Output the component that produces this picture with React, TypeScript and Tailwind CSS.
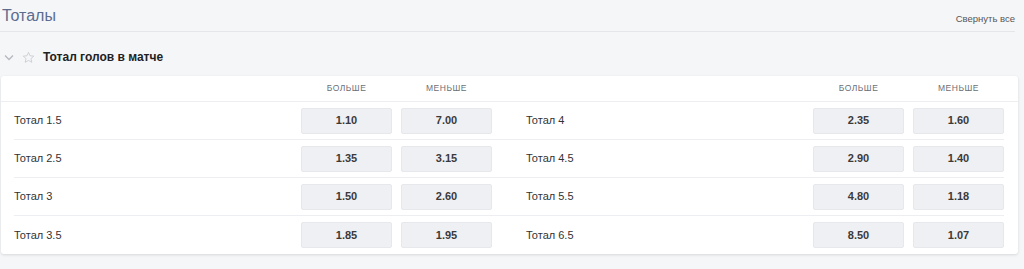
import React from "react";

const rows = [
  { l: "Тотал 1.5", lo: "1.10", lu: "7.00", r: "Тотал 4", ro: "2.35", ru: "1.60" },
  { l: "Тотал 2.5", lo: "1.35", lu: "3.15", r: "Тотал 4.5", ro: "2.90", ru: "1.40" },
  { l: "Тотал 3", lo: "1.50", lu: "2.60", r: "Тотал 5.5", ro: "4.80", ru: "1.18" },
  { l: "Тотал 3.5", lo: "1.85", lu: "1.95", r: "Тотал 6.5", ro: "8.50", ru: "1.07" },
];

function Odd({ v }: { v: string }) {
  return (
    <div className="w-[91px] h-[26px] flex items-center justify-center rounded-[2px] bg-[#eff0f3] border border-[#e6e8ec] text-[11px] font-bold text-[#3a3a3a]">
      {v}
    </div>
  );
}

export default function App() {
  return (
    <div
      className="w-[1024px] h-[269px] bg-[#f5f6f8] overflow-hidden"
      style={{ fontFamily: '"Liberation Sans", Arial, sans-serif' }}
    >
      <div className="flex items-end justify-between h-[32px] mr-[9px] border-b border-[#e4e6ea] pb-[7px]">
        <div className="pl-[2px] text-[16px] leading-none text-[#5b6c8f]">Тоталы</div>
        <div className="text-[9.5px] leading-none text-[#555] mb-[1px]">Свернуть все</div>
      </div>
      <div className="flex items-center h-[44px] pt-[6px]">
        <svg width="10" height="7" viewBox="0 0 10 7" className="ml-[4px]">
          <path d="M1 1.5 L5 5.5 L9 1.5" fill="none" stroke="#b5b9c0" strokeWidth="1.3" />
        </svg>
        <svg width="13" height="13" viewBox="0 0 24 24" className="ml-[8px]">
          <path
            d="M12 2.5l2.9 6.3 6.8.7-5.1 4.6 1.5 6.8L12 17.4l-6.1 3.5 1.5-6.8-5.1-4.6 6.8-.7z"
            fill="none"
            stroke="#c3c6cc"
            strokeWidth="1.4"
            strokeLinejoin="round"
          />
        </svg>
        <div className="ml-[8px] text-[12px] font-bold text-[#222]">Тотал голов в матче</div>
      </div>
      <div className="ml-[1px] w-[1017px] bg-white rounded-[3px] shadow-[0_1px_3px_rgba(0,0,0,0.12)]">
        <div className="h-[26px] border-b border-[#eceef1] flex items-center pl-[13px] text-[8.5px] tracking-[0.5px] text-[#6b6f76]">
          <div className="w-[287px]" />
          <div className="w-[91px] text-center">БОЛЬШЕ</div>
          <div className="w-[9px]" />
          <div className="w-[91px] text-center">МЕНЬШЕ</div>
          <div className="w-[34px]" />
          <div className="w-[287px]" />
          <div className="w-[91px] text-center">БОЛЬШЕ</div>
          <div className="w-[9px]" />
          <div className="w-[91px] text-center">МЕНЬШЕ</div>
        </div>
        <div className="ml-[13px] w-[990px]">
          {rows.map((r, i) => (
            <div
              key={i}
              className={
                "h-[38px] flex items-center text-[11px] text-[#333] " +
                (i < rows.length - 1 ? "border-b border-[#eceef1]" : "")
              }
            >
              <div className="w-[287px]">{r.l}</div>
              <Odd v={r.lo} />
              <div className="w-[9px]" />
              <Odd v={r.lu} />
              <div className="w-[34px]" />
              <div className="w-[287px]">{r.r}</div>
              <Odd v={r.ro} />
              <div className="w-[9px]" />
              <Odd v={r.ru} />
            </div>
          ))}
        </div>
      </div>
    </div>
  );
}
